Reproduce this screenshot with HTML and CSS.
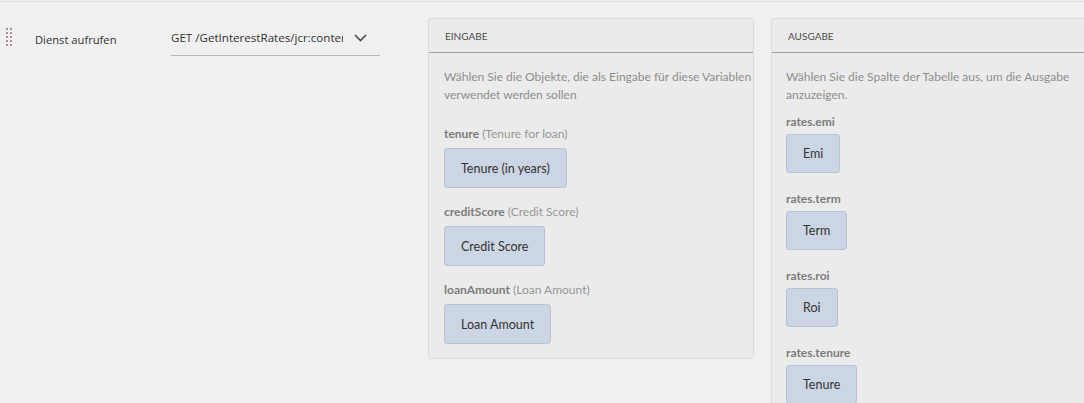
FILE: index.html
```html
<!DOCTYPE html>
<html lang="de">
<head>
<meta charset="utf-8">
<title>Dienst aufrufen</title>
<link rel="stylesheet" href="styles.css">
</head>
<body>
<div class="topline"></div>
<div class="page">
  <div class="grip">
    <svg width="6" height="18" viewBox="0 0 6 18">
      <g fill="#a8948e">
        <rect x="0" y="0" width="2" height="2"/><rect x="4" y="0" width="2" height="2"/>
        <rect x="0" y="4" width="2" height="2"/><rect x="4" y="4" width="2" height="2"/>
        <rect x="0" y="8" width="2" height="2"/><rect x="4" y="8" width="2" height="2"/>
        <rect x="0" y="12" width="2" height="2"/><rect x="4" y="12" width="2" height="2"/>
        <rect x="0" y="16" width="2" height="2"/><rect x="4" y="16" width="2" height="2"/>
      </g>
    </svg>
  </div>
  <div class="action-label">Dienst aufrufen</div>
  <div class="select">
    <span class="select-value">GET /GetInterestRates/jcr:content</span>
    <svg class="chevron" width="13" height="8" viewBox="0 0 13 8"><path d="M1 1 L6.5 6.5 L12 1" fill="none" stroke="#4a4a4a" stroke-width="1.6"/></svg>
  </div>

  <section class="panel panel-input">
    <header class="panel-head">EINGABE</header>
    <div class="panel-body">
      <p class="desc">Wählen Sie die Objekte, die als Eingabe für diese Variablen<br>verwendet werden sollen</p>
      <div class="field">
        <div class="field-label"><b>tenure</b> (Tenure for loan)</div>
        <button class="chip">Tenure (in years)</button>
      </div>
      <div class="field">
        <div class="field-label"><b>creditScore</b> (Credit Score)</div>
        <button class="chip">Credit Score</button>
      </div>
      <div class="field">
        <div class="field-label"><b>loanAmount</b> (Loan Amount)</div>
        <button class="chip">Loan Amount</button>
      </div>
    </div>
  </section>

  <section class="panel panel-output">
    <header class="panel-head">AUSGABE</header>
    <div class="panel-body">
      <p class="desc">Wählen Sie die Spalte der Tabelle aus, um die Ausgabe<br>anzuzeigen.</p>
      <div class="field">
        <div class="field-label"><b>rates.emi</b></div>
        <button class="chip">Emi</button>
      </div>
      <div class="field">
        <div class="field-label"><b>rates.term</b></div>
        <button class="chip">Term</button>
      </div>
      <div class="field">
        <div class="field-label"><b>rates.roi</b></div>
        <button class="chip">Roi</button>
      </div>
      <div class="field">
        <div class="field-label"><b>rates.tenure</b></div>
        <button class="chip">Tenure</button>
      </div>
    </div>
  </section>
</div>
</body>
</html>
```

FILE: styles.css
```css
html, body {
  margin: 0;
  padding: 0;
  background: #f0f0f0;
  overflow: hidden;
  height: 403px;
}

.topline {
  margin-top: 1px;
  height: 1px;
  background: #dcdcdc;
}

.page {
  display: flex;
  align-items: flex-start;
  padding-top: 16px;
  font-family: "Open Sans", "Noto Sans", sans-serif;
}

.page > * {
  flex: none;
}

.grip {
  margin-left: 6px;
  margin-top: 10px;
  width: 6px;
  height: 18px;
  line-height: 0;
}

.action-label {
  margin-left: 23px;
  margin-top: 13px;
  width: 136px;
  font-size: 11.2px;
  line-height: 18px;
  color: #333;
}

.select {
  margin-top: 11px;
  width: 209px;
  height: 27px;
  border-bottom: 1px solid #b9b9b9;
  display: flex;
  align-items: flex-start;
  justify-content: space-between;
  box-sizing: border-box;
}

.select-value {
  width: 172px;
  overflow: hidden;
  white-space: nowrap;
  text-overflow: clip;
  font-size: 11.6px;
  line-height: 18px;
  color: #333;
}

.chevron {
  margin-top: 5px;
  margin-right: 13px;
}

.panel {
  box-sizing: border-box;
  border: 1px solid #dcdcdc;
  border-radius: 3px;
  background: #ebebeb;
  font-family: "Lato", "Open Sans", sans-serif;
}

.panel-input {
  margin-left: 48px;
  width: 326px;
}

.panel-output {
  margin-left: 17px;
  width: 340px;
  height: 420px;
  border-right: none;
}

.panel-head {
  height: 34px;
  box-sizing: border-box;
  padding: 11px 0 0 16px;
  font-size: 10px;
  line-height: 12px;
  color: #4b4b4b;
  border-bottom: 1px solid #a0a0a0;
}

.panel-body {
  padding: 15px 0 14px 15px;
}

.desc {
  margin: 0;
  font-size: 12px;
  line-height: 18px;
  color: #8e8e8e;
}

.field-label {
  font-size: 12px;
  line-height: 18px;
  color: #979797;
}

.field-label b {
  color: #7c7c7c;
  font-weight: 700;
}

.chip {
  display: block;
  font: inherit;
  font-size: 12.5px;
  color: #333;
  background: #ccd5e3;
  border: 1px solid #b9c3d4;
  border-radius: 3px;
  padding: 0 16px;
  cursor: pointer;
}

.panel-input .field {
  margin-top: 15px;
}

.panel-input .field:first-of-type {
  margin-top: 21px;
}

.panel-input .field-label {
  margin-bottom: 5px;
}

.panel-input .chip {
  height: 40px;
}

.panel-output .panel-body {
  padding-left: 14px;
}

.panel-output .field {
  margin-top: 17px;
}

.panel-output .field:first-of-type {
  margin-top: 9px;
}

.panel-output .field-label {
  margin-bottom: 3px;
}

.panel-output .chip {
  height: 39px;
}
```
